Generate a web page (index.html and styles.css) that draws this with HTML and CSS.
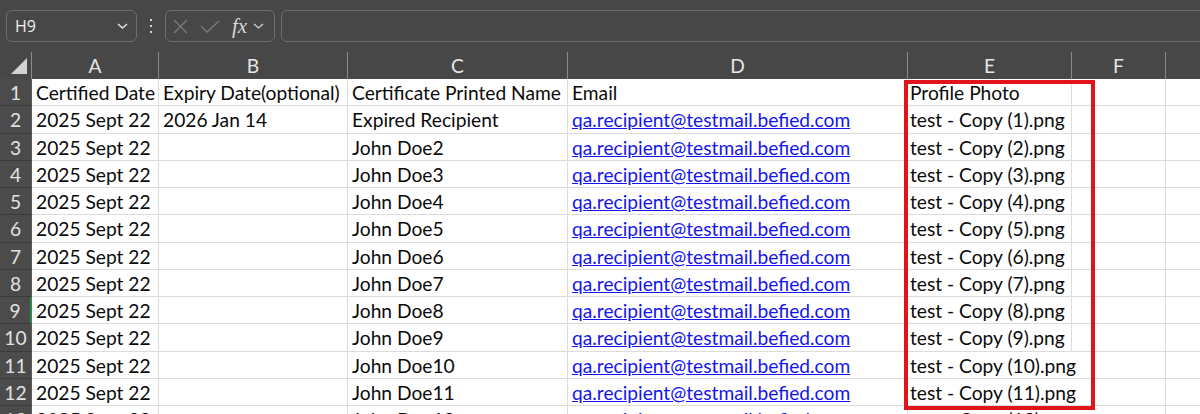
FILE: index.html
```html
<!DOCTYPE html>
<html lang="en">
<head>
  <meta charset="UTF-8">
  <meta name="viewport" content="width=device-width, initial-scale=1.0">
  <title>Recipients import sheet</title>
  <link rel="stylesheet" href="styles.css">
</head>
<body>

  <div class="toolbar">
    <div class="namebox">
      <span>H9</span>
      <svg class="chev" width="11" height="6" viewBox="0 0 11 6"><path d="M1 1l4.5 4 4.5-4" fill="none" stroke="#e6e6e6" stroke-width="1.4"/></svg>
    </div>
    <div class="grip"><i></i><i></i><i></i></div>
    <div class="fxbox">
      <svg class="cancel" width="15" height="15" viewBox="0 0 15 15"><path d="M1 1l13 13M14 1L1 14" stroke="#7b7b7b" stroke-width="1.3"/></svg>
      <svg class="enter" width="20" height="13" viewBox="0 0 20 13"><path d="M1 6l6 6L19 1" fill="none" stroke="#7b7b7b" stroke-width="1.3"/></svg>
      <span class="fx">fx</span>
      <svg class="fxchev" width="11" height="6" viewBox="0 0 11 6"><path d="M1 1l4.5 4 4.5-4" fill="none" stroke="#d6d6d6" stroke-width="1.3"/></svg>
    </div>
    <div class="formula"></div>
  </div>

  <div class="sheet" id="sheet">
    <div class="corner"><span class="tri"></span></div>
    <div class="ch">A</div>
    <div class="ch">B</div>
    <div class="ch">C</div>
    <div class="ch">D</div>
    <div class="ch">E</div>
    <div class="ch">F</div>
    <div class="ch last"></div>
    <!-- rows are filled in by the script below -->
    <div class="highlight"></div>
  </div>

  <script>
    const EMAIL = "qa.recipient@testmail.befied.com";

    // header row + first recipient
    const rows = [
      ["Certified Date", "Expiry Date(optional)", "Certificate Printed Name", "Email", "Profile Photo"],
      ["2025 Sept 22", "2026 Jan 14", "Expired Recipient", EMAIL, "test - Copy (1).png"]
    ];

    for (let i = 2; i <= 12; i++) {
      rows.push(["2025 Sept 22", "", "John Doe" + i, EMAIL, "test - Copy (" + i + ").png"]);
    }

    const sheet = document.getElementById("sheet");
    const box = sheet.querySelector(".highlight");

    function cell(cls, text) {
      const el = document.createElement("div");
      el.className = cls;
      el.textContent = text;
      sheet.insertBefore(el, box);
      return el;
    }

    rows.forEach((row, index) => {
      const num = index + 1;
      cell(num === 9 ? "rh active" : "rh", num);

      row.forEach((value, col) => {
        let cls = "c";
        if (col === 3 && index > 0) cls += " link";
        if (col === 4) cls += " photo";
        // long file names run over into column F
        if (col === 4 && value.length > 19) cls += " spill";
        cell(cls, value);
      });

      cell("c", "");
      cell("c last", "");
    });
  </script>

</body>
</html>
```

FILE: styles.css
```css
body {
  margin: 0;
  height: 414px;
  overflow: hidden;
  background: #474747;
  font-family: Lato, "Liberation Sans", sans-serif;
}

/* formula bar */

.toolbar {
  display: flex;
  height: 52px;
  padding: 10px 0 10px 6px;
  box-sizing: border-box;
}

.namebox,
.fxbox,
.formula {
  border: 1px solid #6e6e6e;
  border-radius: 6px;
  box-sizing: border-box;
}

.namebox {
  width: 131px;
  display: flex;
  align-items: center;
  justify-content: space-between;
  padding: 0 8px;
  color: #f0f0f0;
  font-family: "Open Sans", sans-serif;
  font-size: 16px;
}

.grip {
  width: 28px;
  display: flex;
  flex-direction: column;
  align-items: center;
  justify-content: center;
  gap: 4px;
}

.grip i {
  width: 2px;
  height: 2px;
  background: #d2d2d2;
}

.fxbox {
  width: 110px;
  display: flex;
  align-items: center;
}

.cancel {
  margin-left: 7px;
}

.enter {
  margin-left: 12px;
}

.fx {
  margin-left: 12px;
  color: #d8d8d8;
  font-family: "Liberation Serif", serif;
  font-style: italic;
  font-size: 21px;
  line-height: 20px;
}

.fxchev {
  margin-left: 6px;
}

.formula {
  flex: 1;
  margin-left: 6px;
  margin-right: -10px;
}

/* grid */

.sheet {
  position: relative;
  display: grid;
  grid-template-columns: 32px 127px 189px 220px 340px 164px 94px 1fr;
  grid-template-rows: 27px;
  grid-auto-rows: 27.25px;
  background: #fff;
  font-size: 19.2px;
  line-height: 27px;
}

.corner,
.ch {
  background: #474747;
  border-right: 1px solid #8a8a8a;
}

.ch {
  color: #e6e6e6;
  text-align: center;
}

.ch.last {
  border-right: none;
}

.corner {
  position: relative;
}

.tri {
  position: absolute;
  right: 4px;
  bottom: 5px;
  width: 0;
  height: 0;
  border-left: 16px solid transparent;
  border-bottom: 16px solid #d4d4d4;
}

.rh {
  background: #4b4b4b;
  color: #e2e2e2;
  text-align: center;
  border-bottom: 1px solid #3b3b3b;
  border-right: 1px solid #5c5c5c;
}

.rh.active {
  border-right: 2px solid #2a8c4f;
}

.c {
  padding: 0 4px;
  border-right: 1px solid #dcdcdc;
  border-bottom: 1px solid #dcdcdc;
  white-space: nowrap;
  color: #0a0a0a;
  min-width: 0;
}

.c.photo {
  padding-left: 2px;
}

.c.spill,
.c.last {
  border-right: none;
}

.link {
  color: #1414f0;
  text-decoration: underline;
}

.highlight {
  position: absolute;
  left: 904px;
  top: 28px;
  width: 191px;
  height: 330px;
  border: 4px solid #e2141b;
  box-sizing: border-box;
  pointer-events: none;
}
```
